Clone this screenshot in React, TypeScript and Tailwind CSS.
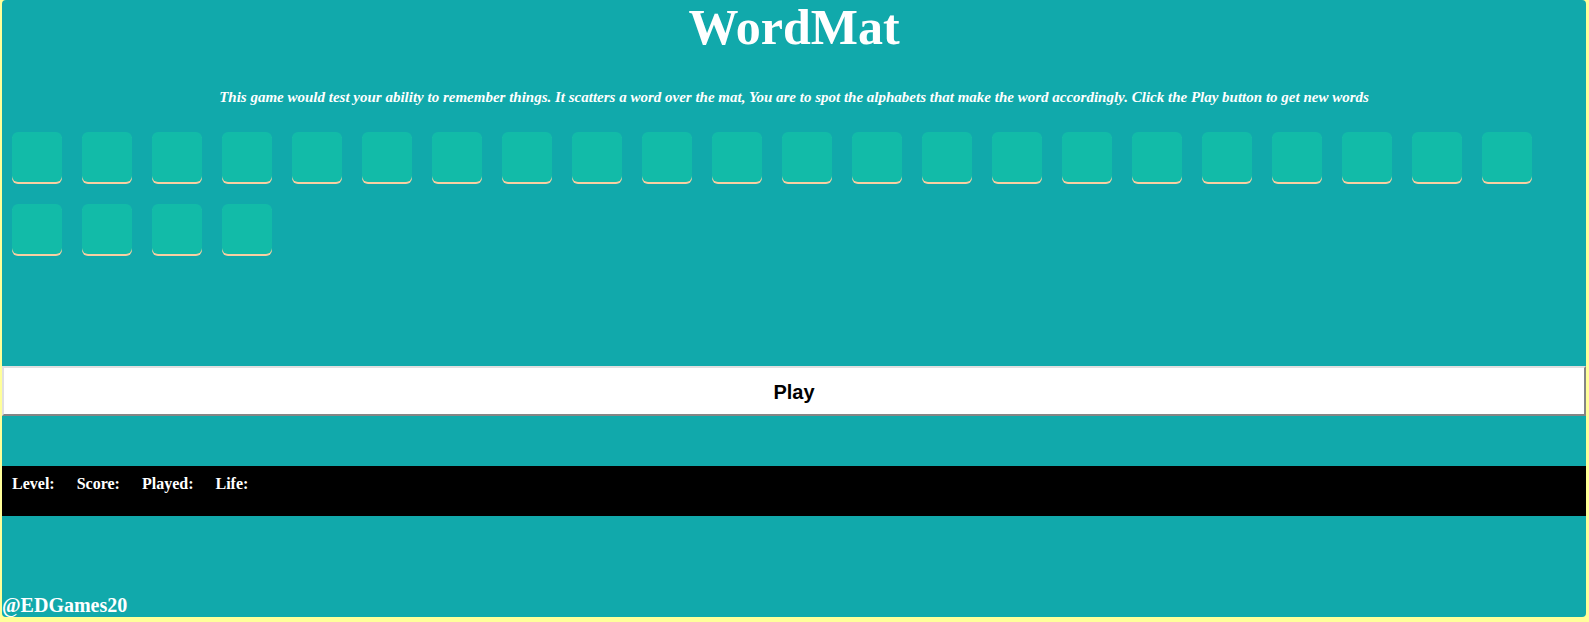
const LETTERS = "ABCDEFGHIJKLMNOPQRSTUVWXYZ".split("");

const serif = "font-['Liberation_Serif','Times_New_Roman',serif]";

export default function App() {
  return (
    <div className="h-[622px] w-full bg-[#ffff99] pl-[2px] pr-[3px]">
      <div className="flex h-[617px] flex-col rounded-[4px] bg-[#11a9ab] text-white">
        <h1 className={`${serif} h-[55px] text-center text-[50px] font-bold leading-[55px]`}>
          WordMat
        </h1>
        <p className={`${serif} mt-[34px] text-center text-[15px] font-bold italic leading-[17px]`}>
          This game would test your ability to remember things. It scatters a word over the mat, You are to spot the
          alphabets that make the word accordingly. Click the Play button to get new words
        </p>

        <div className="mt-[26px] h-[234px]">
          <div className="flex flex-wrap gap-x-[20px] gap-y-[22px] pl-[10px]">
            {LETTERS.map((l) => (
              <div
                key={l}
                className="h-[50px] w-[50px] rounded-[6px] bg-[#12bba8] shadow-[0_2px_0_#f7cfa3]"
              />
            ))}
          </div>
        </div>

        <button
          type="button"
          className="h-[50px] w-full border-2 border-t-[#e0e0e0] border-l-[#e0e0e0] border-b-[#858585] border-r-[#858585] bg-white pt-[2px] font-['Liberation_Sans',Arial,sans-serif] text-[20px] font-bold text-black"
        >
          Play
        </button>

        <div className={`${serif} mt-[50px] flex h-[50px] gap-[22px] bg-black px-[10px] pt-[9px] text-[16px] font-bold leading-[18px]`}>
          <span>Level:</span>
          <span>Score:</span>
          <span>Played:</span>
          <span>Life:</span>
        </div>

        <div className="flex-1" />
        <div className={`${serif} text-[20px] font-bold leading-[23px]`}>@EDGames20</div>
      </div>
    </div>
  );
}
